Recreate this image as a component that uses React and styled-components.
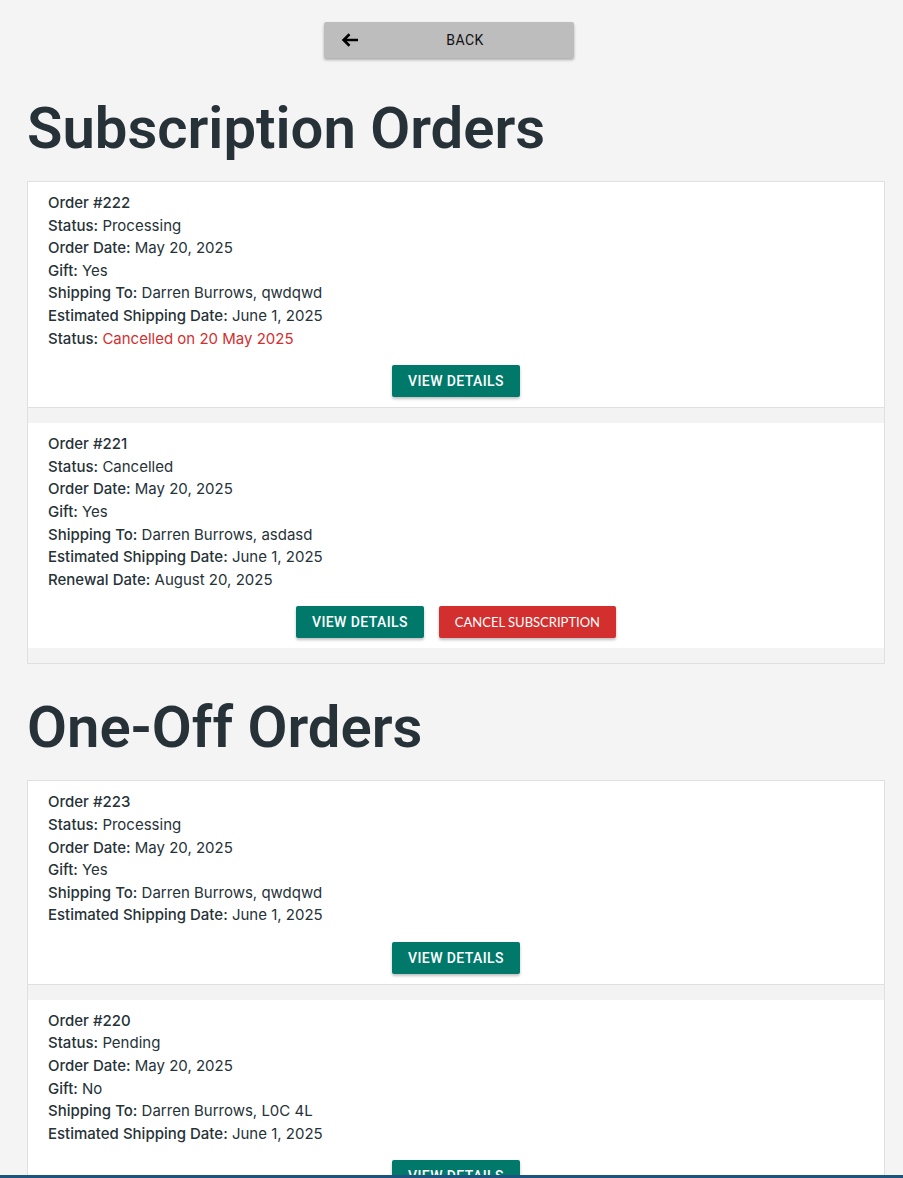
import styled, { createGlobalStyle } from 'styled-components'

const GlobalStyle = createGlobalStyle`
  body {
    margin: 0;
    background: #f4f4f4;
    font-family: Inter, "Noto Sans", sans-serif;
    color: #263238;
  }
`

const Page = styled.div`
  padding: 22px 18px 40px 27px;
`
const TopBar = styled.div`
  display: flex;
  justify-content: center;
  padding-right: 14px;
`
const BackButton = styled.button`
  position: relative;
  display: flex;
  align-items: center;
  justify-content: center;
  width: 250px;
  height: 36px;
  border: none;
  border-radius: 2px;
  background: #bdbdbd;
  box-shadow: 0 2px 3px rgba(0, 0, 0, 0.3);
  font-family: Roboto, sans-serif;
  font-size: 14px;
  letter-spacing: 0.4px;
  color: #111;
  padding-left: 38px;
  cursor: pointer;
  svg {
    position: absolute;
    left: 14px;
    top: 6px;
  }
`
const Heading = styled.h1`
  margin: ${(p) => p.$top}px 0 18px 0;
  font-family: Roboto, sans-serif;
  font-size: 58px;
  line-height: 70px;
  font-weight: 600;
  color: #263238;
`
const OrderList = styled.div`
  border: 1px solid #e0e0e0;
  background: #f3f3f3;
  display: flex;
  flex-direction: column;
`
const OrderCard = styled.div`
  background: #fff;
  padding: 10px 20px 10px 20px;
  margin-bottom: 15px;
  border-bottom: ${(p) => (p.$divider ? '1px solid #e0e0e0' : 'none')};
`
const Line = styled.div`
  font-size: 15px;
  line-height: 22.6px;
  color: #263238;
`
const Label = styled.span`
  font-weight: 500;
`
const Value = styled.span`
  font-weight: 400;
  color: ${(p) => (p.$danger ? '#d32f2f' : 'inherit')};
`
const Actions = styled.div`
  display: flex;
  justify-content: center;
  gap: 15px;
  margin-top: 15px;
`
const ActionButton = styled.button`
  height: 32px;
  padding: 0 16px;
  border: none;
  border-radius: 2px;
  background: ${(p) => (p.$danger ? '#d32f2f' : '#00796b')};
  color: #fff;
  font-family: ${(p) => (p.$danger ? 'Lato, sans-serif' : 'Roboto, sans-serif')};
  font-size: ${(p) => (p.$danger ? '13px' : '14px')};
  font-weight: ${(p) => (p.$danger ? 400 : 500)};
  letter-spacing: ${(p) => (p.$danger ? '0px' : '0.4px')};
  text-transform: uppercase;
  box-shadow: 0 2px 3px rgba(0, 0, 0, 0.25);
  cursor: pointer;
`
const BottomStrip = styled.div`
  position: fixed;
  left: 0;
  right: 0;
  bottom: 0;
  height: 3px;
  background: #1b557f;
`

const subscriptionOrders = [
  {
    id: 222,
    rows: [
      ['Status', 'Processing'],
      ['Order Date', 'May 20, 2025'],
      ['Gift', 'Yes'],
      ['Shipping To', 'Darren Burrows, qwdqwd'],
      ['Estimated Shipping Date', 'June 1, 2025'],
      ['Status', 'Cancelled on 20 May 2025', true],
    ],
    cancel: false,
  },
  {
    id: 221,
    rows: [
      ['Status', 'Cancelled'],
      ['Order Date', 'May 20, 2025'],
      ['Gift', 'Yes'],
      ['Shipping To', 'Darren Burrows, asdasd'],
      ['Estimated Shipping Date', 'June 1, 2025'],
      ['Renewal Date', 'August 20, 2025'],
    ],
    cancel: true,
  },
]

const oneOffOrders = [
  {
    id: 223,
    rows: [
      ['Status', 'Processing'],
      ['Order Date', 'May 20, 2025'],
      ['Gift', 'Yes'],
      ['Shipping To', 'Darren Burrows, qwdqwd'],
      ['Estimated Shipping Date', 'June 1, 2025'],
    ],
  },
  {
    id: 220,
    rows: [
      ['Status', 'Pending'],
      ['Order Date', 'May 20, 2025'],
      ['Gift', 'No'],
      ['Shipping To', 'Darren Burrows, L0C 4L'],
      ['Estimated Shipping Date', 'June 1, 2025'],
    ],
  },
]

function Order({ order, divider }) {
  return (
    <OrderCard $divider={divider}>
      <Line>
        <Label>Order #{order.id}</Label>
      </Line>
      {order.rows.map(([label, value, danger], i) => (
        <Line key={i}>
          <Label>{label}:</Label> <Value $danger={danger}>{value}</Value>
        </Line>
      ))}
      <Actions>
        <ActionButton>View Details</ActionButton>
        {order.cancel && <ActionButton $danger>Cancel Subscription</ActionButton>}
      </Actions>
    </OrderCard>
  )
}

export default function App() {
  return (
    <>
      <GlobalStyle />
      <Page>
        <TopBar>
          <BackButton>
            <svg width="24" height="24" viewBox="0 0 24 24">
              <path
                d="M20 12H6M11.5 6.2L5.6 12l5.9 5.8"
                fill="none"
                stroke="#000"
                strokeWidth="2.6"
              />
            </svg>
            BACK
          </BackButton>
        </TopBar>
        <Heading $top={35}>Subscription Orders</Heading>
        <OrderList>
          {subscriptionOrders.map((o, i) => (
            <Order key={o.id} order={o} divider={i < subscriptionOrders.length - 1} />
          ))}
        </OrderList>
        <Heading $top={28}>One-Off Orders</Heading>
        <OrderList>
          {oneOffOrders.map((o, i) => (
            <Order key={o.id} order={o} divider={i < oneOffOrders.length - 1} />
          ))}
        </OrderList>
      </Page>
      <BottomStrip />
    </>
  )
}
